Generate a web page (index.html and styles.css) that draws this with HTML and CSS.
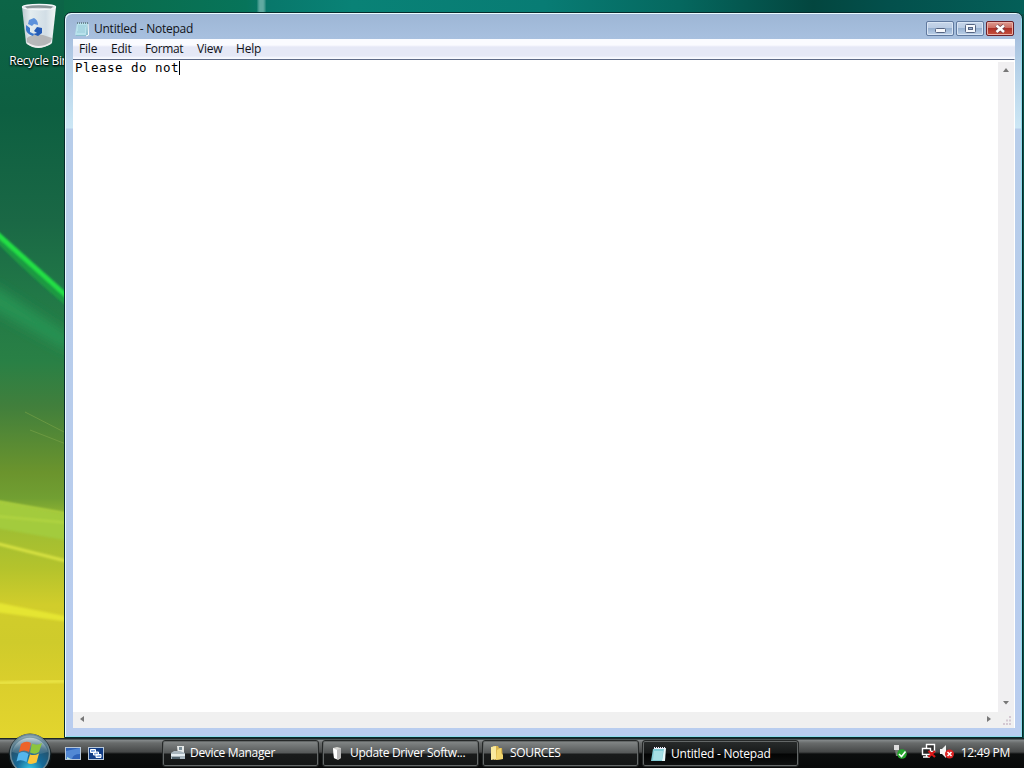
FILE: index.html
```html
<!DOCTYPE html>
<html lang="en">
<head>
<meta charset="utf-8">
<title>Untitled - Notepad</title>
<link rel="stylesheet" href="styles.css">
</head>
<body>
<div class="desktop">
  <svg class="wallpaper" width="1024" height="738" viewBox="0 0 1024 738" aria-hidden="true">
    <defs>
      <linearGradient id="base" x1="0" y1="0" x2="0" y2="1">
        <stop offset="0" stop-color="#0c6547"/><stop offset=".15" stop-color="#0d5f41"/><stop offset=".3" stop-color="#1a6845"/>
        <stop offset=".4" stop-color="#217847"/><stop offset=".49" stop-color="#298045"/><stop offset=".55" stop-color="#417f3c"/>
        <stop offset=".64" stop-color="#6b942d"/><stop offset=".675" stop-color="#719f32"/><stop offset=".71" stop-color="#9dbd33"/>
        <stop offset=".77" stop-color="#b4c32c"/><stop offset=".82" stop-color="#d1cd2b"/><stop offset=".87" stop-color="#cfcb2b"/>
        <stop offset=".93" stop-color="#dbcf2c"/><stop offset="1" stop-color="#e3d52e"/>
      </linearGradient>
      <linearGradient id="top" x1="0" y1="0" x2="1" y2="0">
        <stop offset="0" stop-color="#0b6946"/><stop offset=".19" stop-color="#07745a"/><stop offset=".21" stop-color="#08776a"/>
        <stop offset=".3" stop-color="#098276"/><stop offset=".5" stop-color="#087c74"/><stop offset=".64" stop-color="#05685f"/><stop offset=".78" stop-color="#03463f"/><stop offset=".86" stop-color="#03504c"/><stop offset="1" stop-color="#045f58"/>
      </linearGradient>
      <filter id="b1"><feGaussianBlur stdDeviation="1"/></filter>
      <filter id="b5" x="-50%" y="-50%" width="200%" height="200%"><feGaussianBlur stdDeviation="6"/></filter>
    </defs>
    <rect width="1024" height="738" fill="url(#base)"/>
    <rect x="64" width="960" height="20" fill="url(#top)"/>
    <rect x="1018" y="14" width="6" height="724" fill="#075148"/>
    <rect x="258" y="-4" width="7" height="20" fill="#61aaa1" filter="url(#b1)"/>
    <path d="M-10 283 L70 335 V352 L-10 308Z" fill="#279352" filter="url(#b5)"/>
    <path d="M-5 235 Q28 269 70 304" fill="none" stroke="#1f9a42" stroke-width="8" filter="url(#b1)"/>
    <path d="M-5 232 L70 299" fill="none" stroke="#22e044" stroke-width="5" filter="url(#b1)"/>
    <path d="M25 412 L66 433 M30 430 L66 444" stroke="#7ba348" stroke-width="1" opacity=".6"/>
    <path d="M-5 501 L70 515 V541 L-5 528Z" fill="#a3cb3d" filter="url(#b1)"/>
    <path d="M-5 501 L70 514 M-5 516 L70 523" stroke="#b3d641" stroke-width="2" filter="url(#b1)"/>
    <path d="M-5 543 L70 562" stroke="#d8e242" stroke-width="3" filter="url(#b1)"/>
    <path d="M-5 602 L70 617 V622 L-5 612Z" fill="#e5e532" filter="url(#b1)"/>
    <path d="M-5 683 L70 681" stroke="#ebe647" stroke-width="3" filter="url(#b1)"/>
  </svg>

  <div class="shortcut">
    <svg class="bin" width="38" height="47" viewBox="0 0 38 47" aria-hidden="true">
      <defs><linearGradient id="glass"><stop offset="0" stop-color="#c4ced6"/><stop offset=".25" stop-color="#eef3f8"/><stop offset=".7" stop-color="#dce4ee"/><stop offset="1" stop-color="#fff"/></linearGradient></defs>
      <path d="M2 4 L6 40 Q18 49 32 40 L36 4Z" fill="url(#glass)" opacity=".95"/>
      <path d="M7 35 Q13 30 23 32 L32 35 L30 41 Q18 47 7 40Z" fill="#aaa8a8" opacity=".75"/>
      <path d="M7 40 Q18 48 31 40" fill="none" stroke="#eee" stroke-width="2"/>
      <ellipse cx="19" cy="4" rx="16.500" ry="2.500" fill="#cbd2d9" stroke="#f5f8fa" stroke-width="1.400"/>
      <path d="M5 3.500Q19 1 33 3.500L31 5.500Q18 4 7 5.500Z" fill="#8b9698"/>
      <path d="M9 17 L14 15 Q18 17 18 22 L14 21 L12 23 L8 21Z" fill="#5d92db"/>
      <path d="M6 22 L10 25 L10 29 L14 31 L13 33 Q7 31 6 27Z" fill="#3976cb"/>
      <path d="M14 28 L17 24 L22 25 L22 30 L18 33 L13 31 L17 30Z" fill="#245bb6"/>
    </svg>
    <span class="shortcut-label">Recycle Bin</span>
  </div>

  <main class="window">
    <header class="titlebar">
      <svg class="title-icon" width="16" height="16" viewBox="0 0 16 16" aria-hidden="true">
        <path d="M2 2H13L14 14L12 15H1Z" fill="#8bbfce"/><path d="M2 2H12L11 14H0Z" fill="#b8e2ec"/><path d="M13 3L13.500 14L11 15" fill="none" stroke="#fff"/>
        <path d="M3 5H11M3 7H10M3 9H10M2 11H10" stroke="#87bfd0" stroke-width=".7"/><path d="M2 2H13" stroke="#6d8792" stroke-width="2" stroke-dasharray="1 1"/>
      </svg>
      <h1 class="title">Untitled - Notepad</h1>
      <div class="controls">
        <button class="control" aria-label="Minimize"><svg width="25" height="13" viewBox="0 0 25 13"><rect x="7.500" y="6.500" width="10" height="4" rx="1" fill="#f6f8fc" stroke="#556482"/></svg></button>
        <button class="control" aria-label="Maximize"><svg width="25" height="13" viewBox="0 0 25 13"><rect x="7.500" y="2.500" width="10" height="8" rx="1" fill="#f6f8fc" stroke="#556482"/><rect x="10.500" y="5.500" width="4" height="2" fill="#9bafcf" stroke="#556482"/></svg></button>
        <button class="control close" aria-label="Close"><svg width="25" height="13" viewBox="0 0 25 13"><path d="M8.500 3.500L16 10M16 3.500L8.500 10" stroke="#71424b" stroke-width="4.200"/><path d="M8.500 3.500L16 10M16 3.500L8.500 10" stroke="#fff" stroke-width="2.500"/></svg></button>
      </div>
    </header>
    <div class="client">
      <nav class="menu"><span class="m-file">File</span><span class="m-edit">Edit</span><span class="m-format">Format</span><span class="m-view">View</span><span class="m-help">Help</span></nav>
      <div class="editor">
        <div class="text"><span class="typed">Please do not</span><i class="caret"></i></div>
        <div class="vscroll">
          <svg width="8" height="6" viewBox="0 0 8 6"><path d="M4 1L7 5H1Z" fill="#777"/></svg>
          <svg width="8" height="6" viewBox="0 0 8 6"><path d="M1 1H7L4 4.500Z" fill="#777"/></svg>
        </div>
        <div class="hscroll">
          <svg width="6" height="8" viewBox="0 0 6 8"><path d="M1 4L5 1V7Z" fill="#777"/></svg>
          <svg width="6" height="8" viewBox="0 0 6 8"><path d="M5 4L1 1V7Z" fill="#777"/></svg>
        </div>
        <div class="grip"><svg width="10" height="10" viewBox="0 0 10 10"><path d="M7 0h2v2h-2zM4 3.500h2v2h-2zM7 3.500h2v2h-2zM1 7h2v2h-2zM4 7h2v2h-2zM7 7h2v2h-2z" fill="#d4c8d2"/></svg></div>
      </div>
    </div>
  </main>
</div>

<footer class="taskbar">
  <svg class="start" width="46" height="36" viewBox="0 0 46 36" role="img" aria-label="Start">
    <defs><radialGradient id="orb" cx=".5" cy=".9" r=".85"><stop offset="0" stop-color="#38c8e6"/><stop offset=".4" stop-color="#166a98"/><stop offset=".75" stop-color="#24536e"/><stop offset="1" stop-color="#88a5b1"/></radialGradient>
    <linearGradient id="shine" x1="0" y1="0" x2="0" y2="1"><stop stop-color="#d2dfe4" stop-opacity=".8"/><stop offset="1" stop-color="#7193a2" stop-opacity=".25"/></linearGradient></defs>
    <circle cx="23" cy="23" r="21.500" fill="#0c1b21" opacity=".7"/>
    <circle cx="23" cy="22" r="19.500" fill="url(#orb)" stroke="#6b8794" stroke-width="1.500"/>
    <path d="M5 20A18.500 18.500 0 0 1 41 20Q23 26 5 20Z" fill="url(#shine)"/>
    <path d="M14 12Q19 8 24 11L22 20Q17 17 12 20Z" fill="#ed6429"/>
    <path d="M25 11.500Q30 14 35 11L32 20Q28 23 23 20.500Z" fill="#8cc53e"/>
    <path d="M11.500 21.500Q17 18.500 21.500 22L19.500 30Q14 27 9.500 29.500Z" fill="#54b6ed"/>
    <path d="M23 22.500Q27 24 32 21.500L29.500 30.500Q24 33 20.500 31Z" fill="#fbc63a"/>
  </svg>
  <div class="quick">
    <svg width="16" height="13" viewBox="0 0 16 13"><rect x=".5" y=".5" width="15" height="12" fill="#2e62b8" stroke="#b7c7d9"/><path d="M1 12L1 4L15 1V7Q8 7 7 12Z" fill="#5288d4"/><path d="M2 10l4 2H2z" fill="#b9e8df"/></svg>
    <svg width="16" height="13" viewBox="0 0 16 13"><rect x=".5" y=".5" width="15" height="12" fill="#123d85" stroke="#b7c7d9"/><path d="M2.500 2.500h5v3h-5zM5.500 5h5v3h-5zM8 7.500h5v3H8z" fill="#86a9df" stroke="#fff"/></svg>
  </div>
  <div class="tasks">
    <div class="task"><svg width="16" height="16" viewBox="0 0 16 16"><path d="M7 1H14V10H8Z" fill="#e6e9e8"/><path d="M9 2H12V5H9Z" fill="#7a8d97"/><path d="M1 8L4 6H10L15 8V14H1Z" fill="#a9b6bd"/><path d="M1 9H15V11H1Z" fill="#e5edf0"/><path d="M2 12H10V14H2Z" fill="#51636c"/></svg><span class="t-device">Device Manager</span></div>
    <div class="task"><svg width="16" height="16" viewBox="0 0 16 16"><path d="M3 3L7 2L11 3V13L8 15L4 13Z" fill="#d5d5d1"/><path d="M3 3L7 5V14L4 13Z" fill="#fff"/><path d="M7 5L11 3V13L7 14Z" fill="#bbb"/></svg><span class="t-update">Update Driver Softw...</span></div>
    <div class="task"><svg width="16" height="16" viewBox="0 0 16 16"><path d="M3 1H8L9 3H12L13 14L4 15Z" fill="#d8b34c"/><path d="M1 2L6 1V14L1 15Z" fill="#f9e99d"/><path d="M7 5L11 3V8L13 10V14L6 15Z" fill="#f2d66e"/></svg><span class="t-sources">SOURCES</span></div>
    <div class="task active"><svg width="16" height="16" viewBox="0 0 16 16"><path d="M3 2H15L14 15H1Z" fill="#e8f8f9"/><path d="M2 3H13L11 15H0Z" fill="#82cbd4"/><path d="M3 5H12L11 14H2Z" fill="#a7dfe4"/><path d="M3 2H14" stroke="#eef" stroke-width="2" stroke-dasharray="1 1"/></svg><span class="t-notepad">Untitled - Notepad</span></div>
  </div>
  <div class="tray">
    <svg width="62" height="18" viewBox="0 0 62 18">
      <path d="M2 2H7V7H2Z" fill="#ddd"/><path d="M3 7H8V13H4Z" fill="#777"/><circle cx="10" cy="11" r="4.800" fill="#25a52d"/><path d="M7 11L9.500 13.500L13.500 8.500" fill="none" stroke="#fff" stroke-width="1.600"/>
      <path d="M34.500 1.500H42.500V8.500H34.500Z" fill="#303030" stroke="#fff" stroke-width="1.400"/><path d="M30.500 5.500H38.500V11.500H30.500ZM34.500 11.500V14M31 14H38" fill="#222" stroke="#fff" stroke-width="1.400"/><path d="M36.500 8L43 14M43 8L36.500 14" stroke="#da1717" stroke-width="2.200"/>
      <path d="M48 6H50L54 2V15L50 11H48Z" fill="#f4f4f4"/><circle cx="57.500" cy="11" r="4.500" fill="#dc2222"/><path d="M55.500 9L59.500 13M59.500 9L55.500 13" stroke="#fff" stroke-width="1.500"/>
    </svg>
    <time class="clock">12:49 PM</time>
  </div>
</footer>
</body>
</html>
```
FILE: styles.css
```css
* { box-sizing: border-box; }
body { margin: 0; width: 1024px; height: 768px; overflow: hidden; font: 12px/16px "Open Sans", "Noto Sans", sans-serif; color: #101217; }
svg { display: block; flex: none; }
.desktop { position: relative; height: 738px; overflow: hidden; }
.wallpaper { position: absolute; inset: 0; }
.shortcut { position: absolute; left: 1px; top: 3px; width: 76px; display: flex; flex-direction: column; align-items: center; }
.shortcut-label { margin-top: 3px; color: #fff; white-space: nowrap; letter-spacing: -.3px; text-shadow: 1px 1px 2px #000, 0 1px 2px #000; }
.window { position: absolute; left: 64px; top: 12px; width: 959px; height: 726px; padding: 0 7px 8px 8px; border: 1px solid #062b2c; border-radius: 7px 7px 0 0; box-shadow: inset 1px 1px 0 #e9fbff, inset -1px -1px 0 #8edcec; background: linear-gradient(180deg, #9db6d5 0, #a8c0df 26px, #b4cfe7 50px, #cce7f5 115px, #b7cdea 116px, #b9cdef 100%); }
.titlebar { height: 26px; display: flex; align-items: center; padding: 5px 0 0 1px; }
.title { margin: 0 0 0 3px; font-size: 12px; font-weight: 400; line-height: 16px; letter-spacing: -.25px; white-space: nowrap; }
.title-icon { margin-left: 1px; }
.controls { display: flex; gap: 2px; margin-left: auto; margin-right: 1px; }
.control { width: 28px; height: 15px; padding: 0; display: flex; align-items: center; justify-content: center; border: 1px solid #60799f; border-radius: 2px; background: linear-gradient(#c6d5e9, #b9cbe3 48%, #97b1d1 50%, #bcd0e8); box-shadow: inset 0 0 0 1px #d9e5f4; }
.close { border-color: #6b2029; background: linear-gradient(#dc9b91, #cd6d62 45%, #ad3027 50%, #c6523f); box-shadow: inset 0 0 0 1px #ebb1a7; }
.client { height: 689px; display: flex; flex-direction: column; background: #fff; }
.menu { height: 20px; flex: none; display: flex; padding: 2px 0 0 6px; background: linear-gradient(#fafbff 0 6px, #e5e8f6 8px 17px, #f8f9ff 19px); white-space: nowrap; }
.menu span { flex: none; letter-spacing: -.2px; }
.m-file { width: 32px; } .m-edit { width: 34px; } .m-format { width: 52px; } .m-view { width: 39px; }
.menu .m-format { letter-spacing: -.35px; }
.editor { flex: 1; display: grid; grid-template-columns: 1fr 16px; grid-template-rows: 1fr 16px; border-top: 1px solid #5e6b88; border-right: 1px solid #fff; }
.text { display: flex; padding: 1px 0 0 2px; font: 12.5px/14px "DejaVu Sans Mono", monospace; color: #000; }
.typed { letter-spacing: .48px; white-space: pre; }
.caret { width: 1px; height: 14px; background: #000; }
.vscroll { display: flex; flex-direction: column; justify-content: space-between; align-items: center; padding: 5px 0 6px; background: #f0eff1; margin-top: 2px; }
.hscroll { display: flex; justify-content: space-between; align-items: center; padding: 0 6px 2px; background: #f0f0f0; }
.grip { display: flex; align-items: flex-end; justify-content: flex-end; padding: 2px; background: #f0f0f0; }
.taskbar { position: relative; height: 30px; display: flex; background: linear-gradient(#1d2628 0 1px, #868b8c 2px, #686b6b 5px, #464848 14px, #0c0e0e 16px, #080909); color: #fff; }
.start { margin: -6px 0 0 7px; }
.quick { display: flex; gap: 7px; padding: 9px 0 0 12px; width: 109px; }
.tasks { display: flex; gap: 3px; padding-top: 2px; }
.task { width: 157px; height: 27px; display: flex; align-items: center; gap: 4px; padding: 0 0 1px 7px; border: 1px solid #252828; border-radius: 3px; box-shadow: inset 0 0 0 1px #646868; background: linear-gradient(#858989, #555858 12px, #191b1b 13px, #141616); white-space: nowrap; }
.task span { letter-spacing: -.33px; }
.active { background: linear-gradient(#292c2c, #171919 12px, #030404 13px, #101212); padding: 1px 0 0 8px; }
.task .t-notepad { letter-spacing: -.22px; }
.tray { display: flex; margin-left: auto; padding: 5px 14px 0 0; }
.clock { margin-left: 7px; line-height: 19px; white-space: nowrap; letter-spacing: -.3px; }
```
